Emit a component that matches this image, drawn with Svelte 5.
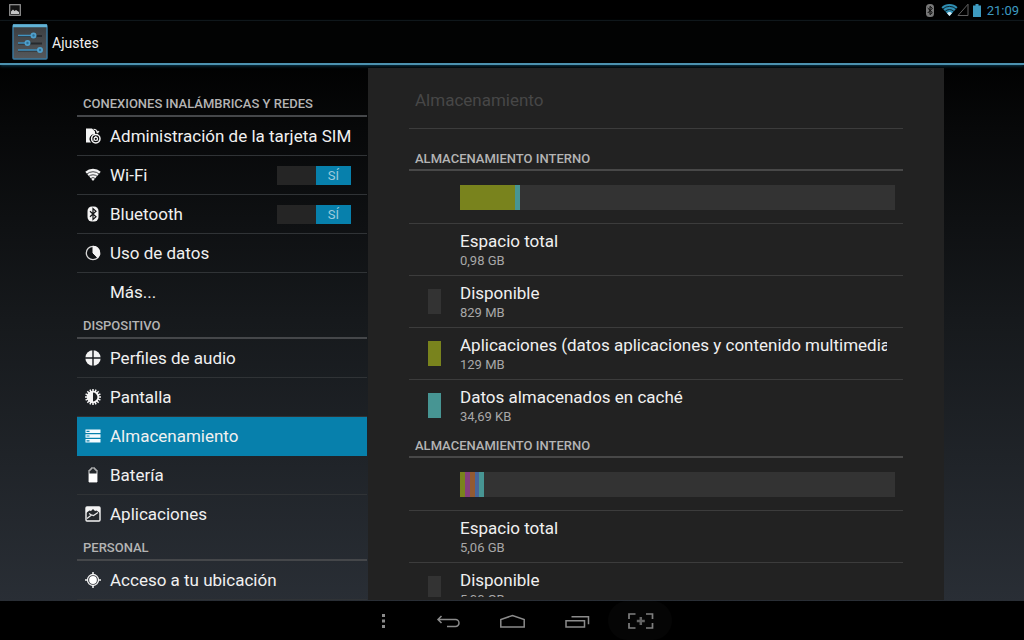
<script>
  const sections = [
    {
      title: 'CONEXIONES INALÁMBRICAS Y REDES',
      items: [
        { label: 'Administración de la tarjeta SIM', icon: 'sim' },
        { label: 'Wi-Fi', icon: 'wifi', toggle: true },
        { label: 'Bluetooth', icon: 'bluetooth', toggle: true },
        { label: 'Uso de datos', icon: 'data' },
        { label: 'Más...', icon: '' },
      ],
    },
    {
      title: 'DISPOSITIVO',
      items: [
        { label: 'Perfiles de audio', icon: 'audio' },
        { label: 'Pantalla', icon: 'display' },
        { label: 'Almacenamiento', icon: 'storage', selected: true },
        { label: 'Batería', icon: 'battery' },
        { label: 'Aplicaciones', icon: 'apps' },
      ],
    },
    {
      title: 'PERSONAL',
      items: [{ label: 'Acceso a tu ubicación', icon: 'location' }],
    },
  ];

  const volumes = [
    {
      title: 'ALMACENAMIENTO INTERNO',
      usage: [
        { color: '#79831d', share: 12.7 },
        { color: '#479593', share: 1.15 },
      ],
      rows: [
        { name: 'Espacio total', value: '0,98 GB' },
        { name: 'Disponible', value: '829 MB', color: '#333333' },
        { name: 'Aplicaciones (datos aplicaciones y contenido multimedia', value: '129 MB', color: '#79831d' },
        { name: 'Datos almacenados en caché', value: '34,69 KB', color: '#479593' },
      ],
    },
    {
      title: 'ALMACENAMIENTO INTERNO',
      usage: [
        { color: '#79831d', share: 1.12 },
        { color: '#833f7e', share: 1.12 },
        { color: '#935a32', share: 1.12 },
        { color: '#48659a', share: 1.12 },
        { color: '#479593', share: 1.12 },
      ],
      rows: [
        { name: 'Espacio total', value: '5,06 GB' },
        { name: 'Disponible', value: '5,00 GB', color: '#333333' },
      ],
    },
  ];

  let switches = $state({ wifi: true, bluetooth: true });
  const teeth = Array.from({ length: 16 }, (_, i) => i * 22.5);
</script>

{#snippet glyph(name)}
  <svg class="glyph" viewBox="0 0 16 16" aria-hidden="true">
    {#if name === 'sim'}
      <path d="M1 .5h6l3 3V6a5 5 0 0 0-4 8.500H1z" fill="#f4f4f4" />
      <path d="M8.500 1.200c2.200.2 3.700 1.300 4.200 3.300M11.200 3.500l1.600 1.300L14 3" fill="none" stroke="#e8e8e8" stroke-width="1.100" />
      <circle cx="10.800" cy="10.800" r="4.200" fill="none" stroke="#f4f4f4" stroke-width="1.500" />
      <circle cx="10.800" cy="10.800" r="1.700" fill="none" stroke="#f4f4f4" stroke-width="1.200" />
      <path d="M10.800 8v1.500M8.300 12.300l1.300-.8M13.300 12.300l-1.300-.8" stroke="#f4f4f4" />
    {:else if name === 'wifi'}
      <path d="M8 14 .3 4.800A11.500 11.500 0 0 1 15.700 4.800z" fill="#f4f4f4" />
      <path d="M1.500 7.300a9.500 9.500 0 0 1 13 0M3.500 9.600a6.500 6.500 0 0 1 9 0M5.500 11.700a3.600 3.600 0 0 1 5 0" fill="none" stroke="#15171a" stroke-width=".8" />
    {:else if name === 'bluetooth'}
      <rect x="2.500" y=".5" width="11" height="15" rx="4.500" fill="#f4f4f4" />
      <path d="m5 5.200 6 5.600-3 2.700v-11l3 2.700-6 5.600" fill="none" stroke="#111315" stroke-width="1.200" />
    {:else if name === 'data'}
      <circle cx="8" cy="8" r="6.700" fill="none" stroke="#d8d8d8" stroke-width="1.300" />
      <path d="M8 1.300a6.700 6.700 0 0 1 4.700 11.500L8 8z" fill="#f4f4f4" stroke="#f4f4f4" />
    {:else if name === 'audio'}
      <circle cx="8" cy="8" r="7.700" fill="#f4f4f4" />
      <path d="M8 0v16M0 8h16" stroke="#1a1d20" stroke-width="1.400" />
    {:else if name === 'display'}
      {#each teeth as angle}
        <path d="M8 0v3" stroke="#f4f4f4" stroke-width="1.500" transform="rotate({angle} 8 8)" />
      {/each}
      <circle cx="8" cy="8" r="5.300" fill="#1b1e21" stroke="#f4f4f4" stroke-width="1.800" />
      <path d="M8 2.500a5.500 5.500 0 0 0 0 11z" fill="#f4f4f4" />
    {:else if name === 'storage'}
      <path d="M.5 1.500h15V5H.5zM.5 6.200h15v3.600H.5zM.5 11h15v3.500H.5z" fill="#f4fbff" />
      <path d="M1.500 3.300h3M1.500 8h3M1.500 12.800h3" stroke="#0780ac" stroke-width="1.200" />
    {:else if name === 'battery'}
      <path d="M6 1h4v2h2v12H4V3h2z" fill="#25292d" stroke="#dcdcdc" />
      <path d="M4 6.500h8V15H4z" fill="#fff" />
    {:else if name === 'apps'}
      <rect x="1" y="1" width="14" height="14" rx="1" fill="#25292d" stroke="#f4f4f4" stroke-width="1.400" />
      <path d="M1 1h14v6L11.500 4.500 10 5 8 3 6 5 4.500 4.500 1 7z" fill="#f4f4f4" />
      <path d="m2 12.500 4.500-3.500 2 .5 4.500-3M4 7.500l2.500 1.500" fill="none" stroke="#e8e8e8" stroke-width="1.200" />
    {:else if name === 'location'}
      <path d="M8 0v16M0 8h16" stroke="#f4f4f4" stroke-width="1.500" />
      <circle cx="8" cy="8" r="5.500" fill="#292d33" stroke="#f4f4f4" stroke-width="1.300" />
      <circle cx="8" cy="8" r="3.900" fill="#fff" />
    {/if}
  </svg>
{/snippet}

<div class="screen">
  <div class="status">
    <svg class="shot" viewBox="0 0 12 12" aria-hidden="true">
      <rect x=".7" y=".7" width="10.600" height="10.600" fill="#111" stroke="#969696" stroke-width="1.200" />
      <path d="M2 10V7.500L4 5.500l1.500 1.500L7 6l3 2v2z" fill="#c4c4c4" />
    </svg>
    <div class="indicators">
      <svg width="8" height="13" viewBox="0 0 8 13" aria-hidden="true">
        <rect width="8" height="13" rx="3.500" fill="#777" />
        <path d="m1.700 4 4.600 4.600-2.300 2V2.400l2.300 2-4.600 4.600" fill="none" stroke="#050505" />
      </svg>
      <svg class="net" width="28" height="14" viewBox="0 0 28 14" aria-hidden="true">
        <path d="M8.500 13 .5 4.200a11.500 11.500 0 0 1 16 0z" fill="#2f8eb3" />
        <path d="M1.800 6.100a9.600 9.600 0 0 1 13.400 0M3.900 8.500a6.400 6.400 0 0 1 9.200 0" fill="none" stroke="#06151b" stroke-width=".9" />
        <path d="m8.500 13-2.500-2.800a3.600 3.600 0 0 1 5 0z" fill="#d8eef5" />
        <path d="M27 1.200v11.300H17z" fill="none" stroke="#606060" />
      </svg>
      <svg width="8" height="13" viewBox="0 0 8 13" aria-hidden="true">
        <path d="M2.500 0h3v1.500H8V13H0V1.500h2.500z" fill="#3e9ac0" />
      </svg>
      <time>21:09</time>
    </div>
  </div>

  <header class="bar">
    <svg class="logo" viewBox="0 0 36 36" aria-hidden="true">
      <defs>
        <linearGradient id="tile" x1="0" y1="0" x2="0" y2="1">
          <stop offset="0" stop-color="#3a3d40" />
          <stop offset="1" stop-color="#55585b" />
        </linearGradient>
      </defs>
      <rect x="1" y="1" width="34" height="34" rx="1" fill="url(#tile)" stroke="#3a7ba3" stroke-width="1.400" />
      <path d="M1 1.800h34" stroke="#62b3d6" stroke-width="3" />
      <path d="M6 12h24M6 19.500h24M6 26.500h24" stroke="#262a2e" stroke-width="2" />
      <path d="M6 11.500h15M6 19h9M6 26h21" stroke="#4293c1" stroke-width="1.400" />
      <g fill="#2f6d92" stroke="#4f9fcb" stroke-width="1.800">
        <circle cx="21.500" cy="11.500" r="2.100" />
        <circle cx="15.500" cy="19" r="2.100" />
        <circle cx="28" cy="26" r="2.100" />
      </g>
    </svg>
    <h1>Ajustes</h1>
  </header>

  <main>
    <nav class="menu" aria-label="Ajustes">
      {#each sections as section}
        <h2 class="heading">{section.title}</h2>
        <ul>
          {#each section.items as item}
            <li class:selected={item.selected}>
              <a href="#{item.icon}" aria-current={item.selected ? 'page' : undefined}>
                {@render glyph(item.icon)}
                <span>{item.label}</span>
              </a>
              {#if item.toggle}
                <button
                  class="switch"
                  class:on={switches[item.icon]}
                  role="switch"
                  aria-checked={switches[item.icon]}
                  aria-label={item.label}
                  onclick={() => (switches[item.icon] = !switches[item.icon])}
                ><span>{switches[item.icon] ? 'SÍ' : 'NO'}</span></button>
              {/if}
            </li>
          {/each}
        </ul>
      {/each}
    </nav>

    <section class="panel">
      <div class="scroll">
        <h2 class="title">Almacenamiento</h2>
        {#each volumes as volume, i}
          <h3 class="heading" class:first={i === 0}>{volume.title}</h3>
          <div class="usage">
            <div class="meter">
              {#each volume.usage as part}
                <i style="width: {part.share}%; background: {part.color}"></i>
              {/each}
            </div>
          </div>
          <dl>
            {#each volume.rows as row}
              <div class="row">
                <i class="swatch" style="background: {row.color ?? 'transparent'}"></i>
                <div class="text">
                  <dt>{row.name}</dt>
                  <dd>{row.value}</dd>
                </div>
              </div>
            {/each}
          </dl>
        {/each}
      </div>
    </section>
  </main>

  <footer class="keys">
    <button aria-label="Menú">
      <svg viewBox="0 0 32 20"><path d="M14 3h3v3h-3zM14 8.500h3v3h-3zM14 14h3v3h-3z" fill="#8b8b8b" /></svg>
    </button>
    <button aria-label="Atrás">
      <svg viewBox="0 0 32 20"><path d="M9.500 5 6 8.500l3.500 3.500M6.500 8.500h17a3.500 3.500 0 0 1 0 7H15" fill="none" stroke="#8b8b8b" stroke-width="1.500" /></svg>
    </button>
    <button aria-label="Inicio">
      <svg viewBox="0 0 32 20"><path d="M4.800 16V8.500L16.500 4.500l11.700 4V16z" fill="none" stroke="#8b8b8b" stroke-width="1.500" /></svg>
    </button>
    <button aria-label="Recientes">
      <svg viewBox="0 0 32 20"><path d="M6 9.800h18.500V16H6zM11.500 5.800H28.500v7.500" fill="none" stroke="#8b8b8b" stroke-width="1.500" /></svg>
    </button>
    <button class="capture" aria-label="Captura">
      <svg viewBox="0 0 32 20"><path d="M5 8V3h6.500M22 3h6.500v5M28.500 12v5H22M11.500 17H5v-5" fill="none" stroke="#808080" stroke-width="1.700" /><path d="M16.800 6v8M12.800 10h8" stroke="#636363" stroke-width="2.500" /></svg>
    </button>
  </footer>
</div>

<style>
  :global(body) {
    margin: 0;
    background: #000;
  }
  .screen {
    display: flex;
    flex-direction: column;
    height: 100vh;
    overflow: hidden;
    color: #f0f0f0;
    font-family: Roboto, sans-serif;
    background: linear-gradient(#000 8%, #070809 20%, #16191c 50%, #292e35 94%);
  }
  h1, h2, h3, ul, dl, dd {
    margin: 0;
    padding: 0;
    font-weight: 400;
  }
  button {
    border: 0;
    padding: 0;
    background: none;
    font: inherit;
    cursor: pointer;
  }
  .status {
    display: flex;
    flex: none;
    align-items: center;
    justify-content: space-between;
    height: 20px;
    padding: 0 5px 0 9px;
    border-bottom: 1px solid #121212;
    background: #000;
  }
  .shot {
    width: 12px;
    height: 12px;
  }
  .indicators {
    display: flex;
    align-items: center;
    gap: 4px;
    color: #3e9ac0;
    font-size: 13px;
  }
  .indicators .net {
    margin-left: 3px;
  }
  time {
    margin-left: 2px;
  }
  .bar {
    display: flex;
    flex: none;
    align-items: center;
    gap: 4px;
    height: 42px;
    padding-left: 12px;
    border-bottom: 2px solid #4c92b0;
    background: #020303;
    box-shadow: 0 1px 3px #0b3a50;
  }
  .logo {
    width: 36px;
    height: 36px;
  }
  h1 {
    padding-top: 2px;
    font-size: 14px;
  }
  main {
    display: grid;
    flex: 1;
    grid-template-columns: 291fr 576fr;
    min-height: 0;
    padding: 3px 80px 0 77px;
  }
  .menu {
    min-width: 0;
    padding-top: 22px;
    margin-right: 1px;
    overflow: hidden;
  }
  .heading {
    display: flex;
    align-items: center;
    box-sizing: border-box;
    height: 27px;
    padding: 3px 0 0 6px;
    border-bottom: 2px solid #45474a;
    color: #b4b4b4;
    font-size: 13px;
    font-weight: 500;
    line-height: 16px;
  }
  ul {
    list-style: none;
  }
  li {
    display: flex;
    align-items: center;
    box-sizing: border-box;
    height: 39px;
    padding-right: 16px;
    border-bottom: 1px solid #303336;
  }
  li:nth-child(5) {
    border-bottom-color: transparent;
  }
  li.selected {
    border-color: #0780ac;
    background: #0780ac;
  }
  li a {
    display: flex;
    flex: 1;
    align-items: center;
    gap: 9px;
    padding-left: 8px;
    color: inherit;
    font-size: 17px;
    text-decoration: none;
    white-space: nowrap;
  }
  .glyph {
    flex: none;
    width: 16px;
    height: 16px;
  }
  .switch {
    display: flex;
    width: 74px;
    height: 19px;
    background: #252525;
  }
  .switch span {
    width: 35px;
    background: #444;
    color: #9ccbdc;
    font-size: 13px;
    line-height: 19px;
  }
  .switch.on {
    justify-content: flex-end;
  }
  .switch.on span {
    background: #0780ac;
  }
  .panel {
    min-width: 0;
    min-height: 0;
    padding: 0 41px 3px;
    margin-bottom: 1px;
    box-sizing: border-box;
    background: #222;
    overflow: hidden;
  }
  .scroll {
    height: 100%;
    overflow: hidden;
  }
  .title {
    box-sizing: border-box;
    height: 61px;
    padding: 2px 6px 0;
    border-bottom: 1px solid #3c3c3c;
    color: #474747;
    font-size: 17px;
    line-height: 60px;
  }
  .panel .heading {
    height: 26px;
    border-color: #484848;
  }
  .panel .first {
    height: 42px;
    padding-top: 19px;
  }
  .usage {
    box-sizing: border-box;
    height: 53px;
    padding: 14px 8px 0 51px;
    border-bottom: 1px solid #3c3c3c;
  }
  .meter {
    display: flex;
    height: 25px;
    background: #333;
  }
  .row {
    display: flex;
    align-items: center;
    box-sizing: border-box;
    height: 52px;
    padding: 0 16px 0 19px;
    border-bottom: 1px solid #3c3c3c;
  }
  .row:nth-child(4) {
    border-color: transparent;
  }
  .swatch {
    flex: none;
    width: 13px;
    height: 25px;
    margin-right: 19px;
  }
  .text {
    min-width: 0;
    overflow: hidden;
    white-space: nowrap;
  }
  dt {
    font-size: 17px;
    line-height: 22px;
  }
  dd {
    color: #a8a8a8;
    font-size: 13px;
    line-height: 18px;
  }
  .keys {
    display: flex;
    flex: none;
    justify-content: center;
    height: 39px;
    background: #000;
  }
  .keys button {
    width: 64px;
  }
  .keys svg {
    width: 32px;
    height: 20px;
    vertical-align: middle;
  }
  .keys .capture {
    border-radius: 24px;
    background: #050505;
  }
</style>
